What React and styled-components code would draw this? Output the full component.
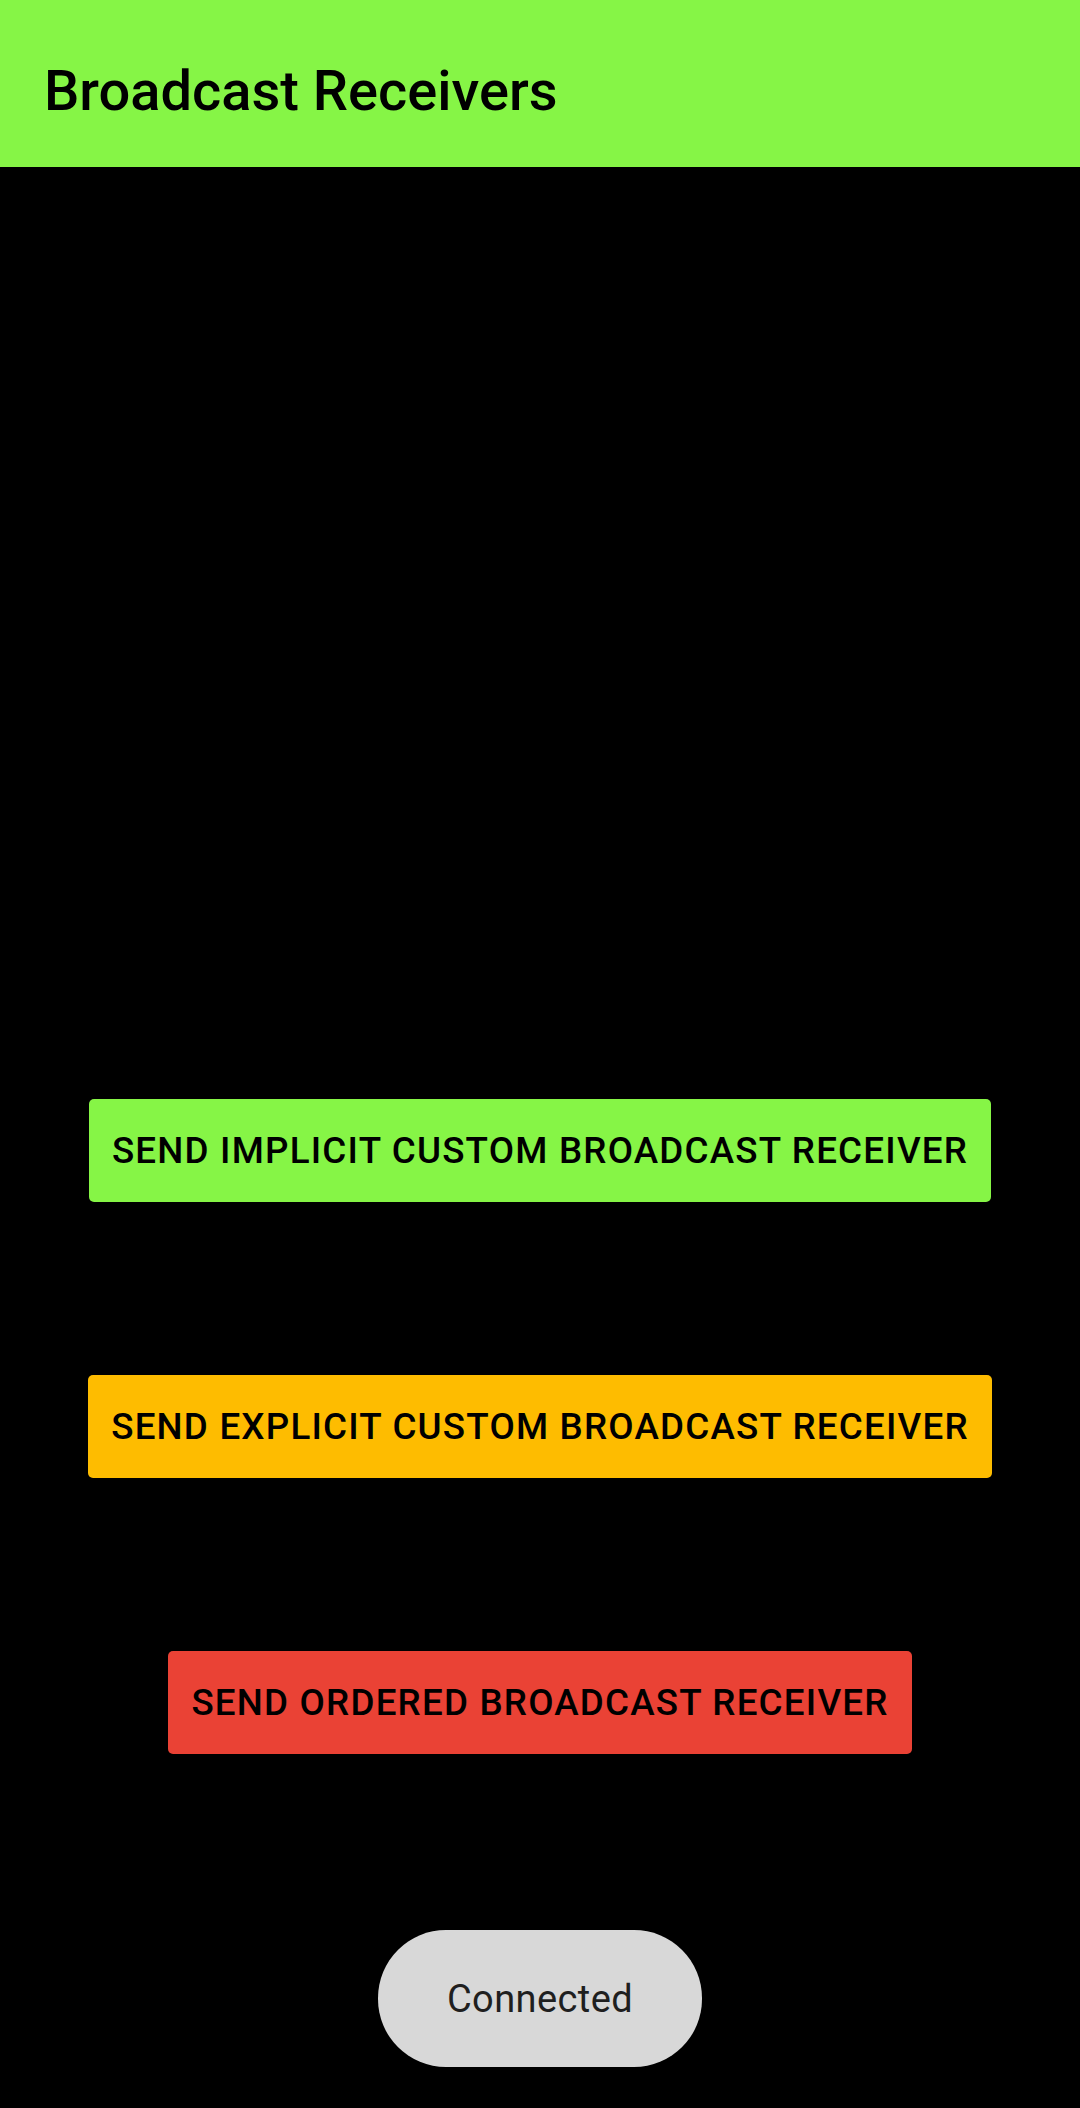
import styled, { createGlobalStyle } from "styled-components";

const GlobalStyle = createGlobalStyle`
    html, body {
        margin: 0;
        padding: 0;
        background: #000000;
        font-family: Roboto, "Liberation Sans", sans-serif;
    }
`;

const buttons = [
    { label: "SEND IMPLICIT CUSTOM BROADCAST RECEIVER", color: "#86f546" },
    { label: "SEND EXPLICIT CUSTOM BROADCAST RECEIVER", color: "#febc00" },
    { label: "SEND ORDERED BROADCAST RECEIVER", color: "#ea4235" },
];

const App = () => {
    return (
        <>
            <GlobalStyle/>
            <ScreenS>
                <AppBarS>
                    <TitleS>Broadcast Receivers</TitleS>
                </AppBarS>
                <ContentS>
                    {buttons.map((b) => (
                        <ButtonS key={b.label} $bg={b.color}>{b.label}</ButtonS>
                    ))}
                    <ToastS>Connected</ToastS>
                </ContentS>
            </ScreenS>
        </>
    );
};

const ScreenS = styled.div`
    width: 1080px;
    height: 2108px;
    background: #000000;
    display: flex;
    flex-direction: column;
    overflow: hidden;
`;

const AppBarS = styled.header`
    height: 167px;
    background: #86f546;
    display: flex;
    align-items: flex-start;
    padding: 63px 0 0 44px;
    box-sizing: border-box;
`;

const TitleS = styled.h1`
    margin: 0;
    font-size: 56px;
    line-height: 1;
    font-weight: 500;
    color: #000000;
    letter-spacing: 0;
`;

const ContentS = styled.main`
    display: flex;
    flex-direction: column;
    align-items: center;
    padding-top: 932px;
    gap: 173px;
`;

const ButtonS = styled.button`
    height: 103px;
    padding: 0 23px;
    border: none;
    border-radius: 5px;
    background: ${(p) => p.$bg};
    color: #000000;
    font-family: Roboto, "Liberation Sans", sans-serif;
    font-size: 36.75px;
    font-weight: 500;
    letter-spacing: 1.2px;
    white-space: nowrap;
`;

const ToastS = styled.div`
    margin-top: 3px;
    width: 324px;
    height: 137px;
    border-radius: 68px;
    background: #d8d8d8;
    color: #1f1f1f;
    font-size: 38px;
    display: flex;
    align-items: center;
    justify-content: center;
    letter-spacing: 0.4px;
`;

export default App;
